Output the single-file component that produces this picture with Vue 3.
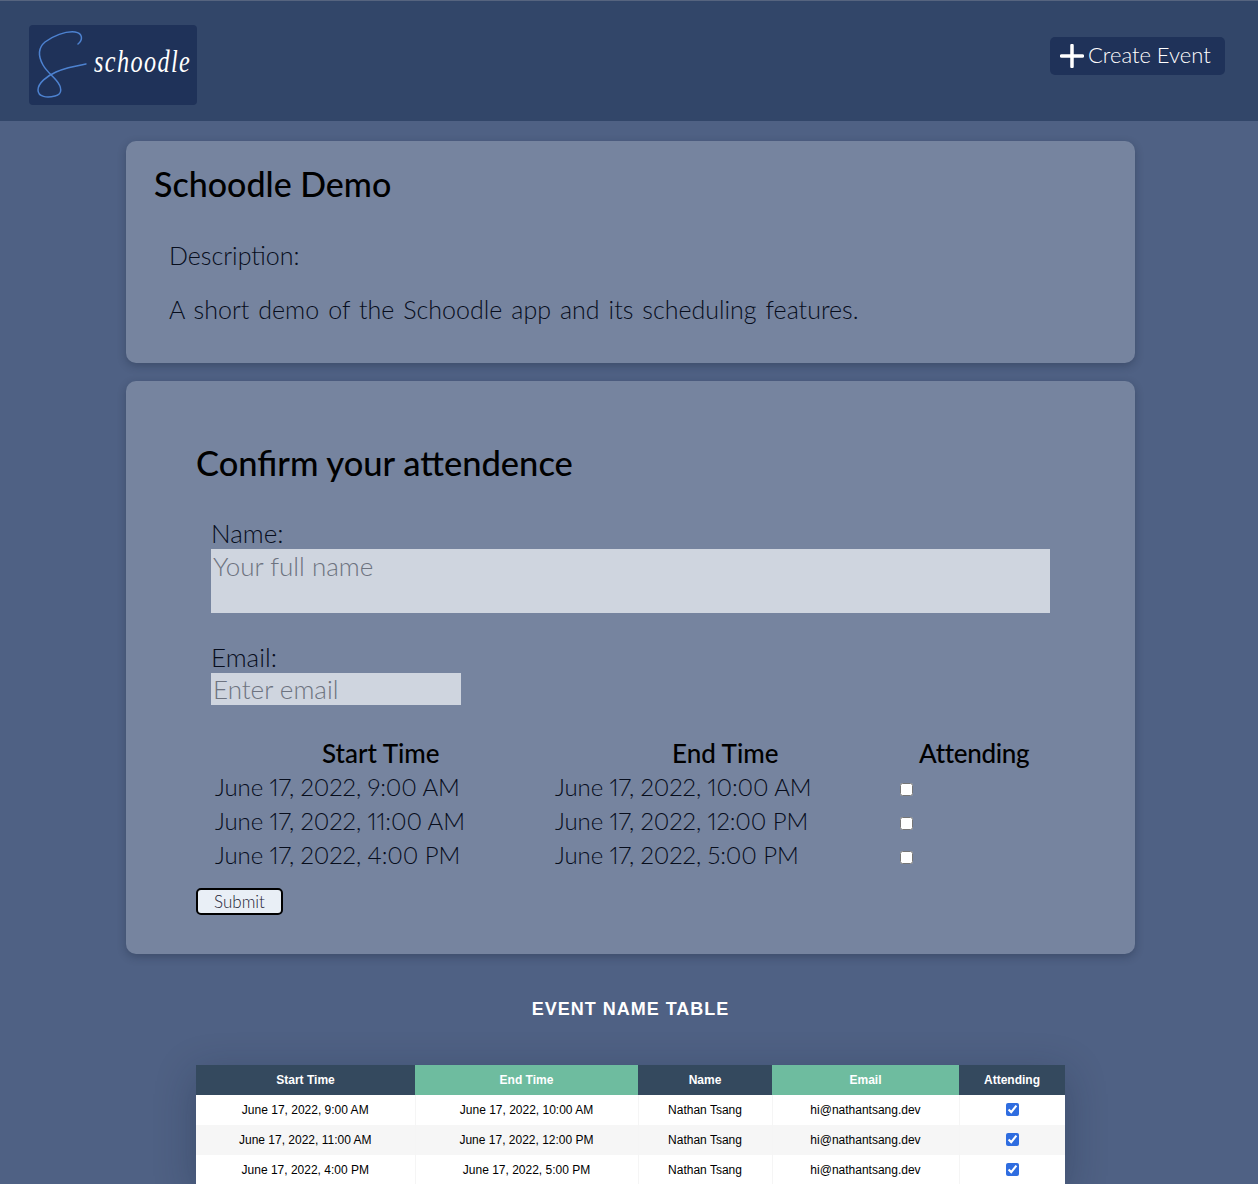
<script setup>
const slots = [
  { start: 'June 17, 2022, 9:00 AM', end: 'June 17, 2022, 10:00 AM' },
  { start: 'June 17, 2022, 11:00 AM', end: 'June 17, 2022, 12:00 PM' },
  { start: 'June 17, 2022, 4:00 PM', end: 'June 17, 2022, 5:00 PM' }
];
</script>

<template>
  <div class="page">
    <header class="topbar">
      <div class="logo">
        <svg class="logo-mark" width="60" height="80" viewBox="0 0 60 80" fill="none">
          <path d="M49 19 C54 15 54 8 46 7 C36 6 24 11 16 17 C9 23 9 31 14 40 C18 47 23 50 27 55 C33 62 34 69 26 71 C18 73 9 72 9 65 C9 58 18 51 27 47 C36 43 46 41 57 39" stroke="#4d82d0" stroke-width="1.500" stroke-linecap="round"/>
        </svg>
        <span class="logo-text">schoodle</span>
      </div>
      <button class="create-btn">
        <svg width="24" height="24" viewBox="0 0 24 24">
          <path d="M12 1.500 V22.500 M1.500 12 H22.500" stroke="#fff" stroke-width="3.500" stroke-linecap="round"/>
        </svg>
        <span class="create-label">Create Event</span>
      </button>
    </header>

    <main class="content">
      <section class="card intro">
        <h1>Schoodle Demo</h1>
        <div class="intro-body">
          <p>Description:</p>
          <p>A short demo of the Schoodle app and its scheduling features.</p>
        </div>
      </section>

      <section class="card form-card">
        <h2>Confirm your attendence</h2>
        <form class="form" @submit.prevent>
          <label class="field">
            <span>Name:</span>
            <input class="name-input" type="text" placeholder="Your full name" />
          </label>
          <label class="field email-field">
            <span>Email:</span>
            <input class="email-input" type="text" placeholder="Enter email" />
          </label>
          <div class="slots">
            <div class="slot-head head-start">Start Time</div>
            <div class="slot-head head-end">End Time</div>
            <div class="slot-head head-att">Attending</div>
            <template v-for="slot in slots" :key="slot.start">
              <div class="slot-cell">{{ slot.start }}</div>
              <div class="slot-cell">{{ slot.end }}</div>
              <div class="slot-check"><input type="checkbox" /></div>
            </template>
          </div>
        </form>
        <button class="submit-btn">Submit</button>
      </section>

      <h3 class="table-title">EVENT NAME TABLE</h3>

      <table class="results">
        <colgroup>
          <col style="width: 219px" />
          <col style="width: 223px" />
          <col style="width: 134px" />
          <col style="width: 187px" />
          <col style="width: 106px" />
        </colgroup>
        <thead>
          <tr>
            <th>Start Time</th>
            <th class="green">End Time</th>
            <th>Name</th>
            <th class="green">Email</th>
            <th>Attending</th>
          </tr>
        </thead>
        <tbody>
          <tr v-for="slot in slots" :key="slot.start">
            <td>{{ slot.start }}</td>
            <td>{{ slot.end }}</td>
            <td>Nathan Tsang</td>
            <td>hi@nathantsang.dev</td>
            <td><input type="checkbox" checked /></td>
          </tr>
        </tbody>
      </table>
    </main>
  </div>
</template>

<style scoped>
.page {
  height: 1184px;
  overflow: hidden;
  background: #4f6184;
  font-family: "Lato", "Open Sans", sans-serif;
  color: #070d1c;
}

.topbar {
  height: 121px;
  box-sizing: border-box;
  border-top: 1px solid #56647f;
  background: #324669;
  display: flex;
  justify-content: space-between;
  align-items: flex-start;
  padding: 24px 33px 0 29px;
}

.logo {
  width: 168px;
  height: 80px;
  background: #1f3259;
  border-radius: 4px;
  display: flex;
  align-items: center;
  overflow: hidden;
}

.logo-mark {
  flex: none;
}

.logo-text {
  margin-left: 5px;
  margin-top: -6px;
  color: #fff;
  font-family: "Liberation Serif", serif;
  font-style: italic;
  font-size: 31px;
  letter-spacing: 1.8px;
  transform: scaleX(0.78);
  transform-origin: left center;
}

.create-btn {
  margin-top: 12px;
  height: 38px;
  width: 175px;
  display: flex;
  align-items: center;
  gap: 4px;
  padding: 0 0 0 10px;
  border: none;
  border-radius: 5px;
  background: #1f3259;
  color: #fff;
  font-family: inherit;
  font-weight: 300;
  font-size: 22px;
}

.create-label {
  margin-top: -3px;
}

.content {
  width: 1009px;
  margin-left: 126px;
  padding-top: 20px;
}

.card {
  background: #76849f;
  border-radius: 10px;
  box-shadow: 0 3px 8px rgba(20, 30, 50, 0.3);
}

.intro {
  height: 222px;
  box-sizing: border-box;
  padding: 23px 28px 0;
  margin-bottom: 18px;
}

h1 {
  margin: 0;
  font-size: 34px;
  line-height: 40px;
  font-weight: 500;
  color: #000;
}

.intro-body {
  padding: 36px 0 0 15px;
  font-size: 25px;
  font-weight: 300;
  line-height: 30px;
  word-spacing: 2.2px;
}

.intro-body p {
  margin: 0 0 24px;
}

.form-card {
  height: 573px;
  box-sizing: border-box;
  padding: 62px 70px 0;
}

h2 {
  margin: 0;
  font-size: 34.5px;
  line-height: 40px;
  font-weight: 500;
  color: #000;
}

.form {
  padding: 35px 15px 0;
}

.field {
  display: block;
  font-size: 26px;
  font-weight: 300;
}

.field span {
  display: block;
  line-height: 31px;
}

.field input {
  display: block;
  border: none;
  box-sizing: border-box;
  background: #cfd5df;
  font-family: inherit;
  font-weight: 300;
  font-size: 26px;
  padding: 0 2px;
  color: #222;
  outline: none;
}

.field input::placeholder {
  color: #6d7380;
}

.name-input {
  width: 839px;
  height: 64px;
  padding-bottom: 30px !important;
}

.email-field {
  margin-top: 29px;
}

.email-input {
  width: 250px;
  height: 32px;
}

.slots {
  margin-top: 31px;
  margin-left: 4px;
  display: grid;
  grid-template-columns: 340px 340px 160px;
  grid-auto-rows: 34px;
  font-size: 24px;
  font-variant-numeric: proportional-nums;
  letter-spacing: -0.1px;
  font-weight: 300;
  line-height: 34px;
}

.slot-head {
  font-weight: 500;
  color: #000;
  font-size: 26px;
  letter-spacing: 0;
}

.head-start {
  padding-left: 107px;
}

.head-end {
  padding-left: 117px;
}

.head-att {
  padding-left: 24px;
  letter-spacing: -0.3px;
  white-space: nowrap;
}

.slot-check {
  display: flex;
  align-items: center;
}

.slot-check input {
  width: 13px;
  height: 13px;
  margin: 4px 0 0 5px;
}

.submit-btn {
  display: block;
  margin-top: 16px;
  width: 87px;
  height: 27px;
  box-sizing: border-box;
  border: 2px solid #000;
  border-radius: 5px;
  background: #e9eff6;
  font-family: inherit;
  font-weight: 300;
  font-size: 17px;
  color: #1a2233;
  padding: 0;
}

.table-title {
  margin: 44px 0 0;
  height: 22px;
  line-height: 22px;
  text-align: center;
  font-family: "Liberation Sans", Arial, sans-serif;
  font-size: 18px;
  font-weight: 700;
  letter-spacing: 1px;
  color: #fff;
}

.results {
  margin: 45px 0 0 70px;
  width: 869px;
  table-layout: fixed;
  border-collapse: collapse;
  background: #fff;
  font-family: "Liberation Sans", Arial, sans-serif;
  font-size: 12px;
  box-shadow: 0 10px 40px rgba(20, 30, 50, 0.3);
}

.results th {
  height: 30px;
  padding: 0;
  background: #34495e;
  color: #fff;
  font-weight: 700;
}

.results th.green {
  background: #6ebc9f;
}

.results td {
  height: 30px;
  padding: 0;
  text-align: center;
  color: #000;
  border-right: 1px solid #f5f5f5;
}

.results td:last-child {
  border-right: none;
}

.results tbody tr:nth-child(even) {
  background: #f6f6f6;
}

.results input {
  display: block;
  margin: -2px auto 0;
  width: 13px;
  height: 13px;
  accent-color: #2f6de0;
}
</style>
